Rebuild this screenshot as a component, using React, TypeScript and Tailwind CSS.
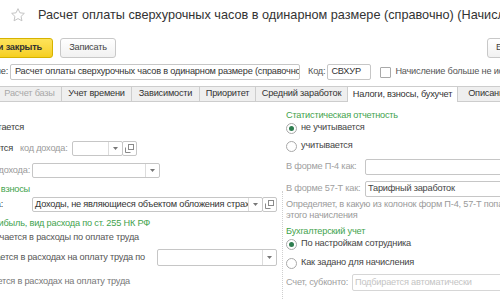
import React from "react";

const Star = () => (
  <svg className="shrink-0" width="16" height="16" viewBox="0 0 24 24" fill="none" stroke="#c4c4c4" strokeWidth="1.5" strokeLinejoin="round">
    <path d="M12 2.5l2.9 6.2 6.6.8-4.9 4.6 1.3 6.6L12 17.4l-5.9 3.3 1.3-6.6-4.9-4.6 6.6-.8z" />
  </svg>
);

const CopyIcon = () => (
  <svg width="9" height="9" viewBox="0 0 9 9" fill="none" stroke="#8a8a8a" strokeWidth="1">
    <rect x="3.5" y="0.5" width="5" height="5" />
    <path d="M0.5 3.5v5h5" />
  </svg>
);

const Arrow = () => (
  <svg width="5" height="3" viewBox="0 0 5 3">
    <path d="M0 0h5L2.5 3z" fill="#777" />
  </svg>
);

function Combo({ w, h = 15, text, copy }: { w: string; h?: number; text?: string; copy?: boolean }) {
  return (
    <div className={`flex shrink-0 ${w}`} style={{ height: h }}>
      <div className="flex flex-1 min-w-0 border border-[#c6c6c6] rounded-[2px] bg-white">
        <div className="flex-1 min-w-0 overflow-hidden whitespace-nowrap px-[2px] flex items-center text-[#333]">{text}</div>
        <div className="w-[14px] shrink-0 border-l border-[#dcdcdc] flex items-center justify-center">
          <Arrow />
        </div>
      </div>
      {copy && (
        <div className="w-[15px] shrink-0 -ml-[1px] border border-[#c6c6c6] rounded-[2px] flex items-center justify-center">
          <CopyIcon />
        </div>
      )}
    </div>
  );
}

function Radio({ checked }: { checked?: boolean }) {
  return (
    <div className="w-[11px] h-[11px] rounded-full border border-[#a9a9a9] bg-white flex items-center justify-center shrink-0">
      {checked && <div className="w-[5px] h-[5px] rounded-full bg-[#2e7d4f]" />}
    </div>
  );
}

// Fixed-width box whose content is right-aligned and spills to the left (clipped by the page edge)
function LeftClip({ w, children, className = "" }: { w: string; children: React.ReactNode; className?: string }) {
  return <div className={`flex justify-end shrink-0 whitespace-nowrap ${w} ${className}`}>{children}</div>;
}

const tabs = [
  { t: "Расчет базы", w: "w-[64px]", dim: true },
  { t: "Учет времени", w: "w-[70px]" },
  { t: "Зависимости", w: "w-[68px]" },
  { t: "Приоритет", w: "w-[56px]" },
  { t: "Средний заработок", w: "w-[92px]" },
  { t: "Налоги, взносы, бухучет", w: "w-[110px]", active: true },
  { t: "Описание", w: "w-[62px]" },
];

export default function App() {
  return (
    <div className="w-[500px] h-[300px] overflow-hidden bg-white font-['Liberation_Sans',Arial,sans-serif] text-[9.2px] tracking-[-0.2px] text-[#3a3a3a] leading-none">
      {/* Title */}
      <div className="h-[30px] flex items-center pl-[10px] gap-[12px] whitespace-nowrap">
        <Star />
        <div className="shrink-0 text-[12.7px] tracking-normal text-[#333]">Расчет оплаты сверхурочных часов в одинарном размере (справочно) (Начисление)</div>
      </div>

      {/* Toolbar */}
      <div className="mt-[8px] h-[20px] flex items-stretch whitespace-nowrap">
        <LeftClip w="w-[53px]">
          <div className="h-full px-[10px] flex items-center rounded-[3px] border border-[#d6b300] bg-gradient-to-b from-[#fde35a] to-[#f6cf1c] font-bold text-[#333]">
            Записать и закрыть
          </div>
        </LeftClip>
        <div className="ml-[7px] w-[56px] shrink-0 rounded-[3px] border border-[#c8c8c8] bg-gradient-to-b from-white to-[#f1f1f1] flex items-center justify-center text-[#444]">
          Записать
        </div>
        <div className="ml-auto -mr-[20px] w-[33px] shrink-0 rounded-[3px] border border-[#c8c8c8] bg-gradient-to-b from-white to-[#f1f1f1] flex items-center pl-[8px] text-[#444]">
          Еще
        </div>
      </div>

      {/* Name row */}
      <div className="mt-[6px] h-[16px] flex items-center whitespace-nowrap">
        <LeftClip w="w-[8px]" className="text-[#444]">Наименование:</LeftClip>
        <div className="ml-[2px] w-[290px] shrink-0 h-full border border-[#c6c6c6] rounded-[2px] px-[4px] flex items-center overflow-hidden text-[#333]">
          Расчет оплаты сверхурочных часов в одинарном размере (справочно)
        </div>
        <div className="ml-[8px] shrink-0 text-[#555]">Код:</div>
        <div className="ml-[2px] w-[44px] shrink-0 h-full border border-[#c6c6c6] rounded-[2px] px-[3px] flex items-center text-[#333]">СВХУР</div>
        <div className="ml-[9px] w-[11px] h-[11px] shrink-0 border border-[#a9a9a9] rounded-[1px] bg-white" />
        <div className="ml-[4px] shrink-0 text-[#555]">Начисление больше не используется</div>
      </div>

      {/* Tabs */}
      <div className="mt-[6px] h-[16px] flex -ml-[2px] whitespace-nowrap">
        {tabs.map((tab) => (
          <div
            key={tab.t}
            className={`${tab.w} shrink-0 flex items-center justify-center border-t border-r border-[#cdcdcd] ${
              tab.active ? "bg-white" : "bg-[#efefef] border-b"
            } ${tab.dim ? "text-[#a8a8a8]" : "text-[#333]"}`}
          >
            {tab.t}
          </div>
        ))}
        <div className="flex-1 border-b border-[#cdcdcd]" />
      </div>

      {/* Body */}
      <div className="flex whitespace-nowrap">
        {/* Left column */}
        <div className="w-[283px] shrink-0 flex flex-col">
          <div className="mt-[19px] h-[14px] flex items-center">
            <LeftClip w="w-[24px]">
              <span className="inline-flex items-center gap-[4px]"><Radio />Не облагается</span>
            </LeftClip>
          </div>
          <div className="mt-[6px] h-[15px] flex items-center">
            <LeftClip w="w-[13px]">
              <span className="inline-flex items-center gap-[4px]"><Radio checked />Облагается</span>
            </LeftClip>
            <span className="ml-[7px] shrink-0 text-[#9a9a9a]">код дохода:</span>
            <div className="ml-[4px]"><Combo w="w-[65px]" copy /></div>
          </div>
          <div className="mt-[7px] h-[15px] flex items-center">
            <LeftClip w="w-[30px]" className="text-[#9a9a9a]">Категория дохода:</LeftClip>
            <div className="ml-[2px]"><Combo w="w-[128px]" /></div>
          </div>
          <div className="mt-[5px] h-[14px] flex items-center">
            <LeftClip w="w-[30px]" className="text-[#3fa34d]">Страховые взносы</LeftClip>
          </div>
          <div className="h-[15px] flex items-center">
            <LeftClip w="w-[3px]" className="text-[#444]">Вид дохода:</LeftClip>
            <div className="ml-[29px]"><Combo w="w-[245px]" text="Доходы, не являющиеся объектом обложения страховыми взносами" copy /></div>
          </div>
          <div className="mt-[5px] h-[14px] flex items-center">
            <LeftClip w="w-[150px]" className="text-[#3fa34d]">Налог на прибыль, вид расхода по ст. 255 НК РФ</LeftClip>
          </div>
          <div className="h-[14px] flex items-center">
            <LeftClip w="w-[139px]" className="text-[#555]">
              <span className="inline-flex items-center gap-[4px]"><Radio checked />Не включается в расходы по оплате труда</span>
            </LeftClip>
          </div>
          <div className="mt-[4px] h-[17px] flex items-center">
            <LeftClip w="w-[145px]" className="text-[#555]">
              <span className="inline-flex items-center gap-[4px]"><Radio />Учитывается в расходах на оплату труда по</span>
            </LeftClip>
            <div className="ml-[12px]"><Combo w="w-[120px]" h={17} /></div>
          </div>
          <div className="mt-[9px] h-[14px] flex items-center">
            <LeftClip w="w-[130px]" className="text-[#777]">
              <span className="inline-flex items-center gap-[4px]"><Radio />Учитывается в расходах на оплату труда</span>
            </LeftClip>
          </div>
        </div>

        {/* Right column */}
        <div className="flex-1 min-w-0 pl-[3px] flex flex-col relative">
          <div className="absolute left-[-1px] top-[89px] bottom-[-20px] border-l border-dotted border-[#cfcfcf]" />
          <div className="mt-[8px] h-[12px] flex items-center text-[#3fa34d]">Статистическая отчетность</div>
          <div className="h-[12px] flex items-center gap-[4px] text-[#444]"><Radio checked />не учитывается</div>
          <div className="mt-[6px] h-[12px] flex items-center gap-[4px] text-[#444]"><Radio />учитывается</div>
          <div className="mt-[7px] h-[16px] flex items-center">
            <span className="w-[79px] shrink-0 text-[#a0a0a0]">В форме П-4 как:</span>
            <div className="w-[150px] shrink-0 h-full border border-[#c6c6c6] rounded-[2px]" />
          </div>
          <div className="mt-[6px] h-[16px] flex items-center">
            <span className="w-[79px] shrink-0 text-[#a0a0a0]">В форме 57-Т как:</span>
            <div className="w-[150px] shrink-0 h-full border border-[#c6c6c6] rounded-[2px] px-[2px] flex items-center text-[#444]">Тарифный заработок</div>
          </div>
          <div className="mt-[2px] text-[#9a9a9a] leading-[11px]">
            <div>Определяет, в какую из колонок форм П-4, 57-Т попадет сумма</div>
            <div>этого начисления</div>
          </div>
          <div className="mt-[5px] h-[12px] flex items-center text-[#3fa34d]">Бухгалтерский учет</div>
          <div className="h-[12px] flex items-center gap-[4px] text-[#444]"><Radio checked />По настройкам сотрудника</div>
          <div className="mt-[7px] h-[12px] flex items-center gap-[4px] text-[#444]"><Radio />Как задано для начисления</div>
          <div className="mt-[5px] h-[17px] flex items-center">
            <span className="w-[66px] shrink-0 text-[#a0a0a0]">Счет, субконто:</span>
            <div className="w-[160px] shrink-0 h-full border border-[#d6d6d6] rounded-[2px] px-[2px] flex items-center text-[#c4c4c4]">Подбирается автоматически</div>
          </div>
        </div>
      </div>
    </div>
  );
}
